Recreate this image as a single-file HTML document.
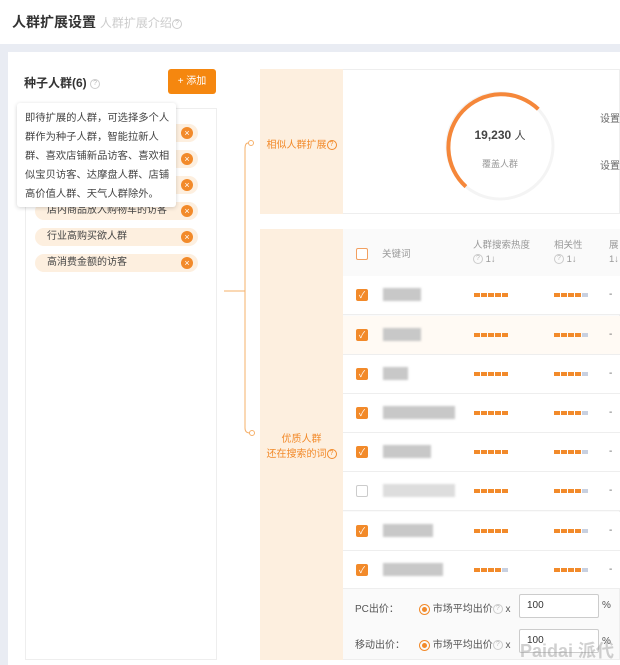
<!DOCTYPE html>
<html><head><meta charset="utf-8"><style>
*{margin:0;padding:0;box-sizing:border-box}
body{width:620px;height:665px;overflow:hidden;background:#e9ecf3;font-family:"Liberation Sans","Noto Sans CJK SC",sans-serif;font-size:10px;color:#555;position:relative}
.a{position:absolute}
.q{display:inline-block;width:10px;height:10px;border:1px solid #ccc;border-radius:50%;font-size:7px;line-height:8px;text-align:center;color:#bbb;vertical-align:middle}
.qo{border-color:#f28a2a;color:#f28a2a}
.tag{position:absolute;left:35px;width:163px;height:18px;background:#fdefdf;border-radius:9px;font-size:10px;color:#444;line-height:18px;padding-left:12px}
.tag i{position:absolute;right:5px;top:3px;width:12px;height:12px;border-radius:50%;background:#f28a2a;color:#fff;font-style:normal;font-size:9px;line-height:12px;text-align:center}
.row{position:absolute;left:343px;width:277px;height:39px;border-bottom:1px solid #eee;background:#fff}
.cb{position:absolute;left:13px;top:13px;width:12px;height:12px;background:#f28a2a;border-radius:2px;color:#fff;font-size:9px;line-height:12px;text-align:center}
.cb.e{background:#fff;border:1px solid #ccc}
.bl{position:absolute;left:40px;top:12px;height:13px;background:#c8c8c8;filter:blur(1px)}
.st{position:absolute;top:17px;height:4px;display:flex;gap:1px}
.st b{width:6px;height:4px;background:#f28a2a}
.st b.g{background:#c8d0e0}
.d{position:absolute;left:266px;top:13px;color:#666}
</style></head><body>
<div class="a" style="left:0;top:0;width:620px;height:44px;background:#fff"></div>
<div class="a" style="left:12px;top:12px;font-size:14px;color:#333;font-weight:bold">人群扩展设置 <span style="font-weight:normal;font-size:12px;color:#ccc">人群扩展介绍<span class="q">?</span></span></div>
<div class="a" style="left:8px;top:52px;width:612px;height:613px;background:#fff"></div>
<div class="a" style="left:24px;top:74px;font-size:12px;font-weight:bold;color:#333">种子人群(6) <span class="q" style="font-weight:normal">?</span></div>
<div class="a" style="left:168px;top:69px;width:48px;height:25px;background:#f5870f;border-radius:3px;color:#fff;font-size:10px;line-height:25px;text-align:center">+ 添加</div>
<div class="a" style="left:25px;top:108px;width:192px;height:552px;border:1px solid #eee"></div>
<div class="tag" style="top:124px">x<i>×</i></div>
<div class="tag" style="top:150px">x<i>×</i></div>
<div class="tag" style="top:176px">x<i>×</i></div>
<div class="tag" style="top:202px">店内商品放入购物车的访客<i>×</i></div>
<div class="tag" style="top:228px">行业高购买欲人群<i>×</i></div>
<div class="tag" style="top:254px">高消费金额的访客<i>×</i></div>
<div class="a" style="left:17px;top:103px;width:159px;height:104px;background:#fff;box-shadow:0 1px 4px rgba(0,0,0,.18);border-radius:3px;padding:6px 6px 0 8px;font-size:10.3px;line-height:19px;color:#444">即待扩展的人群，可选择多个人群作为种子人群，智能拉新人群、喜欢店铺新品访客、喜欢相似宝贝访客、达摩盘人群、店铺高价值人群、天气人群除外。</div>
<svg class="a" style="left:220px;top:135px" width="40" height="305"><path d="M4 156H25M25 14V293Q25 298 30 298" fill="none" stroke="#f5b06a" stroke-width="1"/><path d="M25 14Q25 8 28 8" fill="none" stroke="#f5b06a"/><circle cx="31" cy="8" r="2.5" fill="#fff" stroke="#f5b06a"/><circle cx="32" cy="298" r="2.5" fill="#fff" stroke="#f5b06a"/></svg>
<div class="a" style="left:260px;top:69px;width:360px;height:145px;border:1px solid #eee;background:#fff"></div>
<div class="a" style="left:260px;top:69px;width:83px;height:145px;background:#fdefdf;color:#f28a2a;font-size:10px;padding-top:67px;text-align:center">相似人群扩展<span class="q qo">?</span></div>
<svg class="a" style="left:440px;top:86px" width="120" height="120"><circle cx="60" cy="60" r="53" fill="none" stroke="#f4f4f4" stroke-width="3"/><path d="M25.9 100.6A53 53 0 1 1 98.3 23.2" fill="none" stroke="#f5873a" stroke-width="4"/></svg>
<div class="a" style="left:460px;top:127px;width:80px;text-align:center;font-size:12px;font-weight:bold;color:#444">19,230 <span style="font-weight:normal;font-size:11px">人</span></div>
<div class="a" style="left:460px;top:157px;width:80px;text-align:center;font-size:9px;color:#999">覆盖人群</div>
<div class="a" style="left:600px;top:110px;color:#666">设置</div>
<div class="a" style="left:600px;top:157px;color:#666">设置</div>
<div class="a" style="left:260px;top:229px;width:360px;height:431px;background:#fafafa;border:1px solid #eee"></div>
<div class="a" style="left:260px;top:229px;width:83px;height:431px;background:#fdefdf;color:#f28a2a;font-size:10px;padding-top:203px;text-align:center;line-height:15px">优质人群<br>还在搜索的词<span class="q qo">?</span></div>
<div class="a" style="left:343px;top:229px;width:277px;height:47px;background:#fafafa;color:#999;font-size:9.5px">
<div class="cb e" style="top:19px;border-color:#f2a060;background:#fff"></div>
<div class="a" style="left:39px;top:17px">关键词</div>
<div class="a" style="left:130px;top:10px;line-height:14px">人群搜索热度<br><span class="q">?</span> 1↓</div>
<div class="a" style="left:211px;top:10px;line-height:14px">相关性<br><span class="q">?</span> 1↓</div>
<div class="a" style="left:266px;top:10px;line-height:14px">展<br>1↓</div>
</div>
<div class="row" style="top:276px"><div class="cb">✓</div><div class="bl" style="width:38px"></div><div class="st" style="left:131px"><b></b><b></b><b></b><b></b><b></b></div><div class="st" style="left:211px"><b></b><b></b><b></b><b></b><b class="g"></b></div><div class="d">-</div></div>
<div class="row" style="top:316px;background:#fffaf4"><div class="cb">✓</div><div class="bl" style="width:38px"></div><div class="st" style="left:131px"><b></b><b></b><b></b><b></b><b></b></div><div class="st" style="left:211px"><b></b><b></b><b></b><b></b><b class="g"></b></div><div class="d">-</div></div>
<div class="row" style="top:355px"><div class="cb">✓</div><div class="bl" style="width:25px"></div><div class="st" style="left:131px"><b></b><b></b><b></b><b></b><b></b></div><div class="st" style="left:211px"><b></b><b></b><b></b><b></b><b class="g"></b></div><div class="d">-</div></div>
<div class="row" style="top:394px"><div class="cb">✓</div><div class="bl" style="width:72px"></div><div class="st" style="left:131px"><b></b><b></b><b></b><b></b><b></b></div><div class="st" style="left:211px"><b></b><b></b><b></b><b></b><b class="g"></b></div><div class="d">-</div></div>
<div class="row" style="top:433px"><div class="cb">✓</div><div class="bl" style="width:48px"></div><div class="st" style="left:131px"><b></b><b></b><b></b><b></b><b></b></div><div class="st" style="left:211px"><b></b><b></b><b></b><b></b><b class="g"></b></div><div class="d">-</div></div>
<div class="row" style="top:472px"><div class="cb e"></div><div class="bl" style="width:72px;background:#ddd"></div><div class="st" style="left:131px"><b></b><b></b><b></b><b></b><b></b></div><div class="st" style="left:211px"><b></b><b></b><b></b><b></b><b class="g"></b></div><div class="d">-</div></div>
<div class="row" style="top:512px"><div class="cb">✓</div><div class="bl" style="width:50px"></div><div class="st" style="left:131px"><b></b><b></b><b></b><b></b><b></b></div><div class="st" style="left:211px"><b></b><b></b><b></b><b></b><b class="g"></b></div><div class="d">-</div></div>
<div class="row" style="top:551px;height:38px"><div class="cb">✓</div><div class="bl" style="width:60px"></div><div class="st" style="left:131px"><b></b><b></b><b></b><b></b><b class="g"></b></div><div class="st" style="left:211px"><b></b><b></b><b></b><b></b><b class="g"></b></div><div class="d">-</div></div>
<div class="a" style="left:355px;top:600px;color:#555">PC出价：</div>
<div class="a" style="left:419px;top:600px;color:#555"><span style="display:inline-block;width:11px;height:11px;border:1px solid #f28a2a;border-radius:50%;vertical-align:middle;position:relative"><span style="position:absolute;left:2px;top:2px;width:5px;height:5px;border-radius:50%;background:#f28a2a"></span></span> 市场平均出价<span class="q">?</span> x</div>
<div class="a" style="left:519px;top:594px;width:80px;height:24px;border:1px solid #ccc;border-radius:2px;background:#fff;padding:5px 7px;color:#333">100</div>
<div class="a" style="left:602px;top:600px;color:#555">%</div>
<div class="a" style="left:355px;top:636px;color:#555">移动出价：</div>
<div class="a" style="left:419px;top:636px;color:#555"><span style="display:inline-block;width:11px;height:11px;border:1px solid #f28a2a;border-radius:50%;vertical-align:middle;position:relative"><span style="position:absolute;left:2px;top:2px;width:5px;height:5px;border-radius:50%;background:#f28a2a"></span></span> 市场平均出价<span class="q">?</span> x</div>
<div class="a" style="left:519px;top:629px;width:80px;height:24px;border:1px solid #ccc;border-radius:2px;background:#fff;padding:5px 7px;color:#333">100</div>
<div class="a" style="left:602px;top:636px;color:#555">%</div>
<div class="a" style="left:520px;top:637px;font-size:18px;font-weight:bold;color:rgba(150,150,150,.45)">Paidai 派代</div>
</body></html>
